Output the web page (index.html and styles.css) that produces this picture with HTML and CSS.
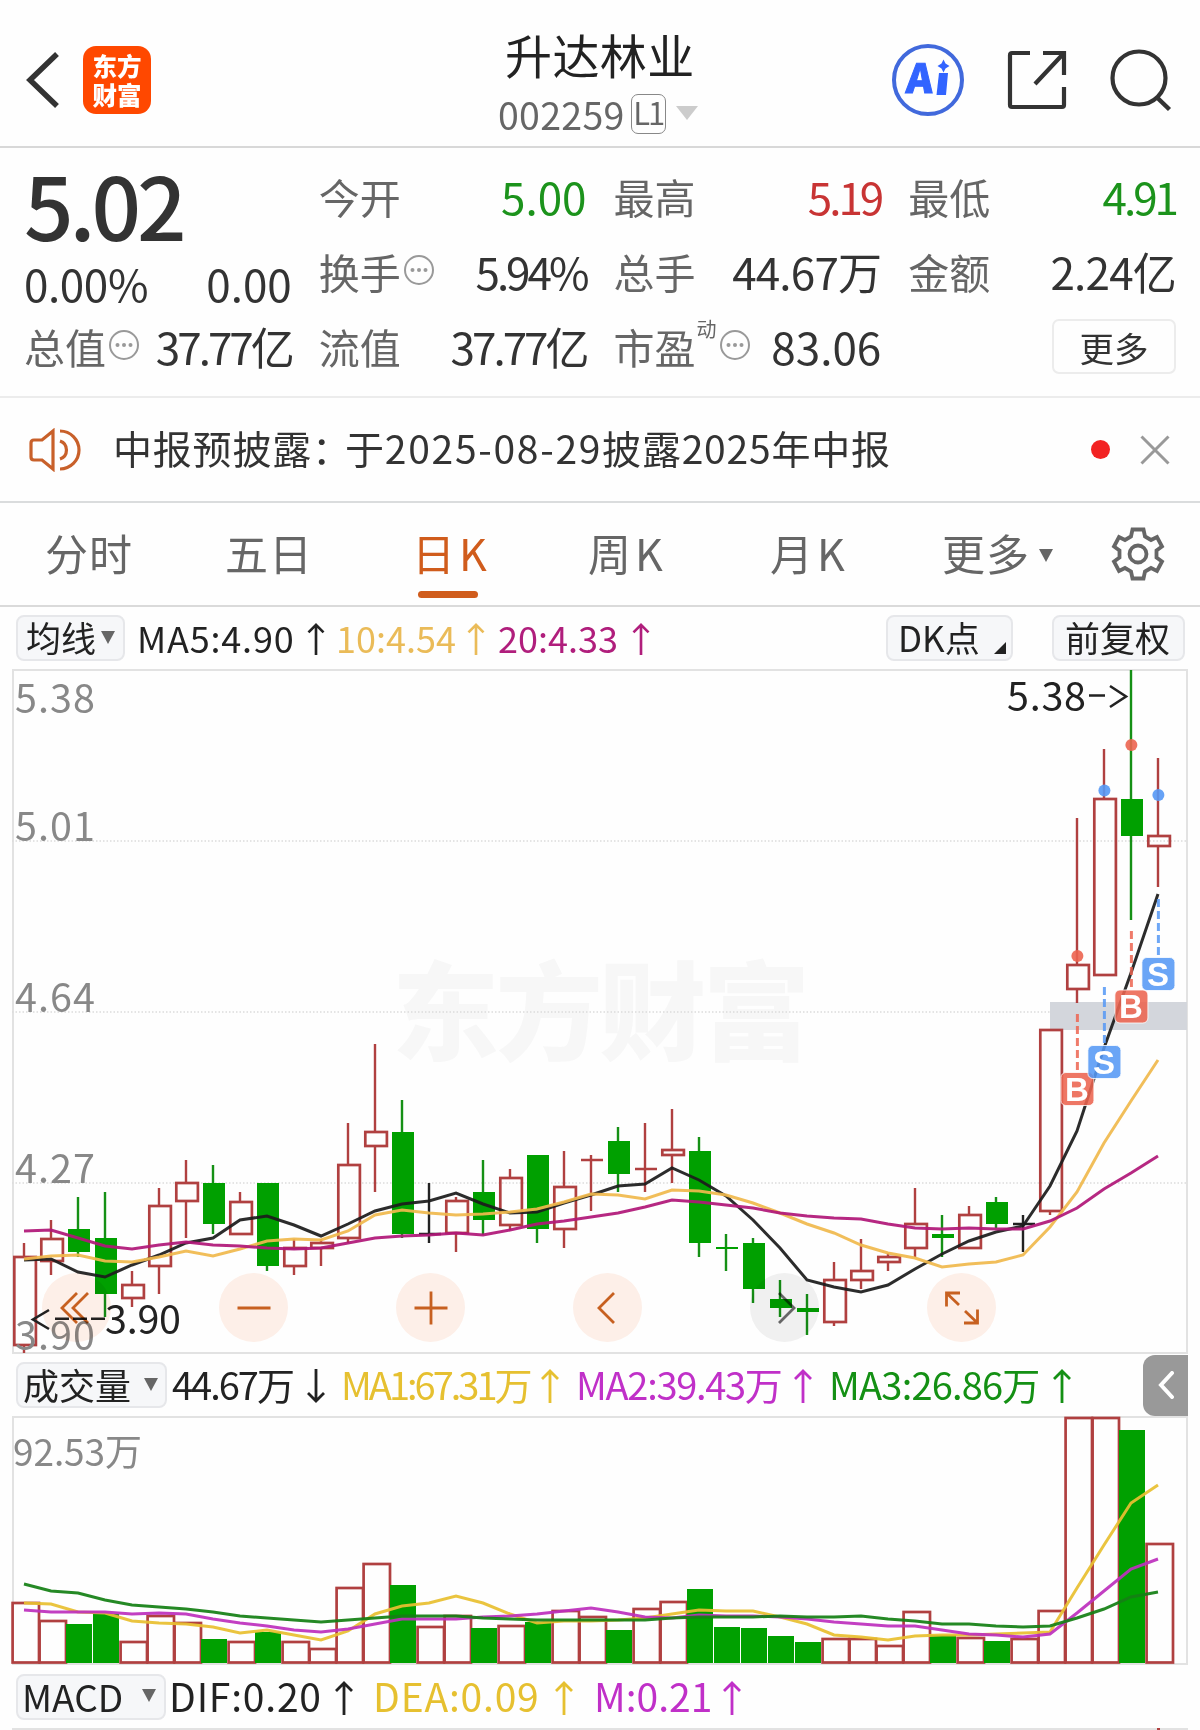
FILE: index.html
```html
<!DOCTYPE html>
<html lang="zh-CN">
<head>
    <meta charset="UTF-8">
    <meta name="viewport" content="width=device-width, initial-scale=1.0">
    <title>升达林业 002259</title>
    <link rel="stylesheet" href="styles.css">
</head>
<body>
    <svg class="defs" width="0" height="0">
        <symbol id="up" viewBox="0 0 18 34"><path d="M9 34V2M1 10L9 2l8 8" fill="none" stroke="currentColor" stroke-width="2.8"/></symbol>
        <symbol id="down" viewBox="0 0 18 34"><path d="M9 0v32M1 24l8 8 8-8" fill="none" stroke="currentColor" stroke-width="2.8"/></symbol>
        <symbol id="info" viewBox="0 0 32 32"><circle cx="16" cy="16" r="14" fill="none" stroke="#999" stroke-width="2"/><circle cx="9.5" cy="16" r="2" fill="#999"/><circle cx="16" cy="16" r="2" fill="#999"/><circle cx="22.5" cy="16" r="2" fill="#999"/></symbol>
    </svg>

    <header class="topbar">
        <svg class="back" viewBox="0 0 34 58"><path d="M31 3L4 29l27 26" fill="none" stroke="#333" stroke-width="5.5"/></svg>
        <div class="logo"><span>东方</span><span>财富</span></div>
        <div class="stock">
            <h1>升达林业</h1>
            <div class="code">002259<span class="level">L1</span><i class="caret"></i></div>
        </div>
        <svg class="ai" viewBox="0 0 74 74">
            <circle cx="37" cy="37" r="34" fill="none" stroke="#4169dc" stroke-width="4"/>
            <text x="18" y="50.5" transform="skewX(-4)" class="ai-text">A</text>
            <path d="M48 30h9l-2 22h-9.500z" fill="#3264ff"/>
            <path d="M52.500 16.500l2 4 4 2.500-4 2.500-2 4-2-4-4-2.500 4-2.500z" fill="#3264ff"/>
        </svg>
        <svg class="share" viewBox="0 0 60 60"><path d="M23 3H5q-2 0-2 2v50q0 2 2 2h50q2 0 2-2V37M36 3h21v22M57 3L28 34" fill="none" stroke="#333" stroke-width="4.2"/></svg>
        <svg class="search" viewBox="0 0 62 64"><circle cx="29" cy="30" r="26.5" fill="none" stroke="#333" stroke-width="4.2"/><path d="M46.500 49l13 12.500" stroke="#333" stroke-width="4.5"/></svg>
    </header>

    <section class="quote">
        <div class="col col-main">
            <div class="price">5.02</div>
            <div class="change"><b class="pct">0.00%</b><b>0.00</b></div>
            <div class="item"><span>总值</span><svg class="info"><use href="#info"/></svg><b class="s3">37.77亿</b></div>
        </div>
        <div class="col">
            <div class="item"><span>今开</span><b class="down">5.00</b></div>
            <div class="item"><span>换手</span><svg class="info"><use href="#info"/></svg><b class="s3">5.94%</b></div>
            <div class="item"><span>流值</span><b class="s3">37.77亿</b></div>
        </div>
        <div class="col">
            <div class="item"><span>最高</span><b class="up s3">5.19</b></div>
            <div class="item"><span>总手</span><b class="s1">44.67万</b></div>
            <div class="item"><span>市盈</span><sup>动</sup><svg class="info"><use href="#info"/></svg><b>83.06</b></div>
        </div>
        <div class="col">
            <div class="item"><span>最低</span><b class="down s3">4.91</b></div>
            <div class="item"><span>金额</span><b class="s1">2.24亿</b></div>
            <div class="item"><button class="more">更多</button></div>
        </div>
    </section>

    <section class="notice">
        <svg class="speaker" viewBox="0 0 52 44"><path d="M24 3L13 12H5q-3 0-3 3v14q0 3 3 3h8l11 9z" fill="none" stroke="#c8602a" stroke-width="3.2"/><path d="M31 13a9.500 9.500 0 0 1 0 18M31 3a19 19 0 0 1 0 38" fill="none" stroke="#c8602a" stroke-width="3.2"/></svg>
        <p>中报预披露<span class="colon">：</span>于<span class="date">2025-08-29</span>披露2025年中报</p>
        <i class="dot"></i>
        <svg class="close" viewBox="0 0 30 30"><path d="M1.500 1.500l27 27M28.500 1.500l-27 27" stroke="#999" stroke-width="3"/></svg>
    </section>

    <nav class="tabs">
        <a>分时</a>
        <a>五日</a>
        <a class="k active">日K</a>
        <a class="k">周K</a>
        <a class="k">月K</a>
        <a>更多<i class="caret"></i></a>
        <svg class="gear" viewBox="-27 -27 54 54"><path d="M-5.500 -24.500H5.500L7 -17.500L13 -14L19 -17L24 -7.500L18.500 -3.500V3.500L24 7.500L19 17L13 14L7 17.500L5.500 24.500H-5.500L-7 17.500L-13 14L-19 17L-24 7.500L-18.500 3.500V-3.500L-24 -7.500L-19 -17L-13 -14L-7 -17.500Z"/><circle r="8.500"/></svg>
    </nav>

    <div class="readout ma">
        <button class="picker">均线<i class="caret"></i></button>
        <div class="val"><span class="w1">MA5:4.90</span><svg><use href="#up"/></svg></div>
        <div class="val gold"><span>10:4.54</span><svg><use href="#up"/></svg></div>
        <div class="val berry"><span>20:4.33</span><svg><use href="#up"/></svg></div>
        <button class="picker dk">DK点<i class="corner"></i></button>
        <button class="picker adj">前复权</button>
    </div>

    <div class="chart">
        <svg id="kline" viewBox="0 669 1200 685"></svg>
        <div class="tools">
            <button><svg viewBox="-18 -18 36 36"><path d="M0 -15L-15 0L0 15M11 -15L-4 0L11 15"/></svg></button>
            <button><svg viewBox="-18 -18 36 36"><path d="M-16.500 0h33"/></svg></button>
            <button><svg viewBox="-18 -18 36 36"><path d="M-16.500 0h33M0 -16.500v33"/></svg></button>
            <button><svg viewBox="-18 -18 36 36"><path d="M6 -15L-9 0L6 15"/></svg></button>
            <button class="off"><svg viewBox="-18 -18 36 36"><path d="M-6 -15L9 0L-6 15"/></svg></button>
            <button><svg viewBox="-18 -18 36 36"><path d="M-15.500 -1.500v-13.500h13.500M-15 -14.500L-3 -3M15.500 1.500v13.500h-13.500M15 14.500L3 3"/></svg></button>
        </div>
    </div>

    <div class="readout vol">
        <button class="picker">成交量<i class="caret"></i></button>
        <div class="val"><span class="s2">44.67万</span><svg><use href="#down"/></svg></div>
        <div class="val yellow"><span class="s3">MA1:67.31万</span><svg><use href="#up"/></svg></div>
        <div class="val violet"><span class="s15">MA2:39.43万</span><svg><use href="#up"/></svg></div>
        <div class="val green"><span class="s1">MA3:26.86万</span><svg><use href="#up"/></svg></div>
        <button class="drawer"><svg viewBox="0 0 16 28"><path d="M14 2L3 14l11 12" fill="none" stroke="#fff" stroke-width="4" stroke-linecap="round"/></svg></button>
    </div>

    <div class="chart">
        <svg id="volume" viewBox="0 1416 1200 249"></svg>
    </div>

    <div class="readout macd">
        <button class="picker">MACD<i class="caret"></i></button>
        <div class="val"><span class="w1">DIF:0.20</span><svg><use href="#up"/></svg></div>
        <div class="val yellow"><span class="w1">DEA:0.09</span><svg><use href="#up"/></svg></div>
        <div class="val violet"><span>M:0.21</span><svg><use href="#up"/></svg></div>
    </div>
    <div class="next-chart"><i></i></div>

    <script src="chart.js"></script>
</body>
</html>
```
FILE: styles.css
```css
* {
    box-sizing: border-box;
}
body {
    margin: 0;
    width: 1200px;
    height: 1730px;
    overflow: hidden;
    background: #fefefe;
    color: #333;
    font-family: "Noto Sans CJK SC", "Noto Sans", sans-serif;
}
h1, p {
    margin: 0;
    font-weight: 400;
}
b, i {
    font-weight: 400;
    font-style: normal;
}
svg {
    display: block;
    flex: none;
}
button {
    font: inherit;
    color: #222;
    padding: 0;
    border: none;
    background: none;
}
.defs {
    position: absolute;
}
.caret {
    display: inline-block;
    border: 7.5px solid transparent;
    border-top: 13px solid #666;
    border-bottom: 0;
}

/* letter spacing steps for figures */
.s1 { letter-spacing: -0.8px; }
.s15 { letter-spacing: -1.3px; }
.s2 { letter-spacing: -2px; }
.s3 { letter-spacing: -3px; }
.w1 { letter-spacing: 0.8px; }

/* top bar */
.topbar {
    display: flex;
    align-items: center;
    height: 148px;
    padding: 14px 28px 0 26px;
    border-bottom: 2px solid #d8d8d8;
}
.back {
    width: 34px;
    height: 58px;
}
.logo {
    display: flex;
    flex-direction: column;
    justify-content: center;
    width: 68px;
    height: 68px;
    margin-left: 23px;
    border-radius: 13px;
    background: #ff4800;
    color: #fff;
    font-size: 24.5px;
    font-weight: 900;
    line-height: 29px;
    text-align: center;
}
.stock {
    width: 210px;
    margin-left: 345px;
    margin-top: 3px;
}
.stock h1 {
    padding-left: 9px;
    font-size: 47px;
    letter-spacing: 0.4px;
    line-height: 64px;
    color: #222;
}
.code {
    display: flex;
    align-items: center;
    padding-left: 2px;
    font-size: 37.5px;
    letter-spacing: 0.3px;
    line-height: 56px;
    color: #666;
}
.level {
    width: 35px;
    height: 40px;
    margin-left: 6px;
    border: 1.5px solid #888;
    border-radius: 7px;
    font-size: 31px;
    letter-spacing: -2px;
    line-height: 33px;
    text-align: center;
}
.code .caret {
    margin-left: 10px;
    margin-bottom: 2px;
    border-width: 14px 11px 0;
    border-top-color: #ccc;
}
.ai {
    width: 74px;
    height: 74px;
    margin-left: 185px;
}
.ai-text {
    font-family: "Noto Sans CJK SC", sans-serif;
    font-size: 40px;
    font-weight: 900;
    fill: #3264ff;
    stroke: #3264ff;
    stroke-width: 1;
}
.share {
    width: 60px;
    height: 60px;
    margin-left: 42px;
}
.search {
    width: 62px;
    height: 64px;
    margin-left: 43px;
}

/* quote */
.quote {
    display: flex;
    gap: 27px;
    height: 250px;
    padding: 11px 24px 0 24px;
    border-bottom: 2px solid #ececec;
}
.col {
    width: 268px;
}
.item {
    display: flex;
    align-items: center;
    height: 75px;
    font-size: 41px;
    line-height: 75px;
    color: #666;
}
.item b {
    margin-left: auto;
    font-size: 44px;
    color: #333;
    white-space: nowrap;
}
.item .down { color: #1c931c; }
.item .up { color: #c83434; }
.item sup {
    align-self: flex-start;
    margin-top: 6px;
    margin-left: 1px;
    font-size: 20px;
    line-height: 28px;
}
.info {
    width: 32px;
    height: 32px;
    margin-left: 2px;
    margin-bottom: 4px;
}
.price {
    height: 88px;
    font-size: 87px;
    font-weight: 500;
    line-height: 88px;
    letter-spacing: -4px;
}
.change {
    display: flex;
    justify-content: space-between;
    height: 62px;
    font-size: 44px;
    line-height: 72px;
}
.pct {
    letter-spacing: -0.4px;
}
.more {
    width: 124px;
    height: 55px;
    margin-left: auto;
    border: 2px solid #ececec;
    border-radius: 7px;
    font-size: 34.5px;
    line-height: 46px;
    color: #333;
}

/* notice */
.notice {
    display: flex;
    align-items: center;
    height: 105px;
    padding: 0 30px 0 29px;
    border-bottom: 2px solid #dadcdd;
}
.speaker {
    width: 52px;
    height: 44px;
}
.notice p {
    width: 979px;
    padding-left: 32px;
    padding-bottom: 5px;
    font-size: 39px;
    letter-spacing: 0.8px;
    line-height: 98px;
    white-space: nowrap;
}
.colon {
    letter-spacing: -6px;
}
.date {
    letter-spacing: 1.7px;
}
.dot {
    width: 19px;
    height: 19px;
    margin-left: 32px;
    border-radius: 50%;
    background: #f22222;
}
.close {
    width: 30px;
    height: 30px;
    margin-left: 30px;
}

/* period tabs */
.tabs {
    display: grid;
    grid-template-columns: 180px 188px 176px 182px 171px 194px 60px;
    align-items: center;
    height: 104px;
    padding-left: 45px;
    border-bottom: 2px solid #dadada;
    font-size: 43px;
    letter-spacing: 1px;
    line-height: 99px;
    color: #666;
}
.tabs a {
    position: relative;
    height: 102px;
    white-space: nowrap;
}
.tabs .k {
    margin-left: -1px;
    letter-spacing: 4px;
}
.tabs .active {
    color: #d05c1c;
}
.tabs .active::after {
    content: "";
    position: absolute;
    left: 6px;
    bottom: 7px;
    width: 60px;
    height: 7px;
    border-radius: 4px;
    background: #d05c1c;
}
.tabs .caret {
    margin-left: 9px;
    vertical-align: 9px;
}
.gear {
    width: 54px;
    height: 54px;
    margin-left: -25px;
    fill: none;
    stroke: #666;
    stroke-width: 3.8;
}

/* indicator rows */
.readout {
    display: flex;
    align-items: center;
    height: 63px;
    padding-left: 16px;
    color: #222;
}
.picker {
    display: flex;
    align-items: center;
    height: 46px;
    border: 2px solid #e6e7ea;
    border-radius: 8px;
    background: #f6f7f9;
    padding-left: 8px;
    padding-bottom: 2px;
    line-height: 40px;
    white-space: nowrap;
}
.val {
    display: flex;
    align-items: center;
    justify-content: space-between;
    padding-bottom: 3px;
    line-height: 54px;
    white-space: nowrap;
}
.val svg {
    width: 18px;
    height: 34px;
    margin-top: 5px;
}
.gold { color: #eabb58; }
.berry { color: #b01e7c; }
.yellow { color: #e6c030; }
.violet { color: #c030c8; }
.green { color: #149014; }

.ma { height: 62px; font-size: 36px; }
.ma .picker { width: 109px; font-size: 35px; }
.ma .caret { margin-left: 5px; }
.ma .val { width: 188px; margin-left: 12px; }
.ma .gold { width: 149px; margin-left: 11px; }
.ma .berry { width: 152px; margin-left: 13px; }
.ma .val svg { height: 32px; }
.ma .dk { position: relative; width: 127px; margin-left: 236px; padding-left: 10px; }
.ma .adj { width: 133px; margin-left: 39px; padding-left: 11px; }
.corner {
    position: absolute;
    right: 5px;
    bottom: 5px;
    border-left: 12px solid transparent;
    border-bottom: 12px solid #222;
}

.vol { height: 62px; font-size: 38px; }
.vol .picker { width: 151px; font-size: 36px; padding-left: 5px; }
.vol .caret { margin-left: 13px; }
.vol .val { width: 153px; margin-left: 5px; }
.vol .yellow { width: 218px; margin-left: 16px; }
.vol .violet { width: 236px; margin-left: 17px; }
.vol .green { width: 242px; margin-left: 17px; }
.drawer {
    display: flex;
    align-items: center;
    width: 45px;
    height: 61px;
    margin-left: 72px;
    padding-left: 15px;
    border-radius: 12px 0 0 12px;
    background: #999;
}
.drawer svg {
    width: 16px;
    height: 28px;
}

.macd { font-size: 39px; }
.macd .picker { width: 150px; font-size: 37px; padding-left: 4px; }
.macd .caret { margin-left: 19px; }
.macd .val { width: 184px; margin-left: 3px; }
.macd .yellow { width: 200px; margin-left: 20px; }
.macd .violet { width: 147px; margin-left: 21px; }

/* charts */
.chart {
    position: relative;
}
.chart > svg {
    overflow: visible;
}
#kline {
    width: 1200px;
    height: 685px;
}
#volume {
    width: 1200px;
    height: 249px;
}
.frame { fill: none; stroke: #e2e2e2; stroke-width: 2; }
.grid { stroke: #dcdcdc; stroke-width: 1.5; stroke-dasharray: 1.5 2; }
.axis { font-size: 39.5px; fill: #888; }
.axis-vol { font-size: 37px; fill: #888; }
.mark { font-size: 39.5px; fill: #222; }
.watermark { font-size: 107px; font-weight: 900; fill: #f7f7f7; }
.gap { fill: #d3d6dc; }
.rise { fill: none; stroke: #b04040; stroke-width: 2.7; }
.fall { fill: #00a000; stroke: none; }
.wick-rise { stroke: #b04040; stroke-width: 2.4; }
.wick-fall { stroke: #159015; stroke-width: 2.4; }
.wick-flat { stroke: #222; stroke-width: 2.4; }
.line { fill: none; stroke-width: 3; stroke-opacity: 0.93; }
.tag { font-family: "Liberation Sans", sans-serif; font-size: 33px; font-weight: 700; fill: #fff; text-anchor: middle; }

.tools {
    position: absolute;
    left: 42px;
    bottom: 12px;
    display: flex;
    gap: 108px;
    mix-blend-mode: multiply;
}
.tools button {
    display: flex;
    align-items: center;
    justify-content: center;
    width: 69px;
    height: 69px;
    border-radius: 50%;
    background: #fef0e9;
}
.tools svg {
    width: 36px;
    height: 36px;
    fill: none;
    stroke: #c86020;
    stroke-width: 2.8;
}
.tools .off {
    background: #f1f1f1;
}
.tools .off svg {
    stroke: #666;
}

.next-chart {
    position: relative;
    width: 1176px;
    height: 2px;
    margin-left: 12px;
    background: #e2e2e2;
}
.next-chart i {
    position: absolute;
    left: 1145px;
    width: 3px;
    height: 2px;
    background: #b04040;
}
```
FILE: chart.js
```js
const STEP = 27;
const FIRST = 24;
const cx = (i) => FIRST + i * STEP;

// [type, high, top, bottom, low]  r = rise, g = fall, k = flat
const candles = [
    ['r', 1243, 1256, 1346, 1353], ['r', 1220, 1238, 1262, 1275], ['g', 1197, 1229, 1252, 1257],
    ['g', 1192, 1238, 1294, 1317], ['r', 1271, 1284, 1299, 1307], ['r', 1188, 1205, 1267, 1294],
    ['r', 1160, 1182, 1202, 1238], ['g', 1165, 1183, 1224, 1234], ['r', 1192, 1201, 1235, 1235],
    ['g', 1183, 1183, 1266, 1271], ['r', 1239, 1247, 1267, 1275], ['r', 1239, 1242, 1249, 1266],
    ['r', 1123, 1164, 1239, 1243], ['r', 1044, 1131, 1147, 1192], ['g', 1100, 1132, 1234, 1238],
    ['k', 1183, 1233, 1235, 1243], ['r', 1197, 1200, 1234, 1252], ['g', 1160, 1192, 1220, 1235],
    ['r', 1169, 1177, 1226, 1230], ['g', 1155, 1155, 1229, 1243], ['r', 1151, 1186, 1230, 1248],
    ['r', 1155, 1159, 1161, 1211], ['g', 1127, 1141, 1174, 1192], ['r', 1123, 1168, 1170, 1192],
    ['r', 1109, 1149, 1156, 1183], ['g', 1137, 1151, 1243, 1257], ['g', 1234, 1247, 1249, 1271],
    ['g', 1238, 1243, 1289, 1303], ['g', 1280, 1299, 1308, 1317], ['g', 1294, 1308, 1312, 1335],
    ['r', 1262, 1279, 1323, 1326], ['r', 1239, 1270, 1281, 1289], ['r', 1253, 1256, 1263, 1271],
    ['r', 1188, 1223, 1249, 1257], ['g', 1215, 1234, 1238, 1257], ['r', 1206, 1214, 1249, 1249],
    ['g', 1197, 1202, 1224, 1228], ['k', 1215, 1223, 1225, 1252], ['r', 1029, 1029, 1212, 1215],
    ['r', 818, 964, 990, 1003], ['r', 749, 798, 976, 976], ['g', 670, 799, 836, 920],
    ['r', 758, 835, 847, 887]
];
const ma5 = [1260, 1259, 1272, 1277, 1265, 1255, 1243, 1238, 1220, 1216, 1225, 1236, 1224, 1211, 1204, 1201, 1193, 1204, 1213, 1212, 1203, 1195, 1186, 1184, 1168, 1180, 1196, 1220, 1248, 1280, 1287, 1292, 1285, 1269, 1254, 1241, 1232, 1226, 1186, 1131, 1048, 973, 894];
const ma10 = [1259, 1256, 1255, 1261, 1262, 1257, 1251, 1256, 1249, 1241, 1239, 1240, 1231, 1215, 1210, 1213, 1215, 1214, 1212, 1209, 1202, 1194, 1195, 1199, 1190, 1191, 1195, 1203, 1213, 1224, 1233, 1245, 1253, 1258, 1267, 1264, 1262, 1255, 1227, 1192, 1143, 1101, 1060];
const ma20 = [1231, 1230, 1238, 1246, 1249, 1245, 1242, 1245, 1246, 1248, 1249, 1248, 1243, 1238, 1236, 1235, 1233, 1235, 1230, 1224, 1221, 1217, 1213, 1207, 1200, 1202, 1205, 1208, 1213, 1216, 1218, 1219, 1224, 1228, 1229, 1228, 1229, 1229, 1221, 1208, 1189, 1173, 1156];

const volumes = [
    ['r', 1603], ['r', 1621], ['g', 1624], ['g', 1614], ['r', 1642], ['r', 1616], ['r', 1623], ['g', 1639], ['r', 1642],
    ['g', 1632], ['r', 1642], ['r', 1649], ['r', 1588], ['r', 1564], ['g', 1585], ['r', 1627], ['r', 1616], ['g', 1628],
    ['r', 1626], ['g', 1622], ['r', 1611], ['r', 1617], ['g', 1630], ['r', 1609], ['r', 1602], ['g', 1589], ['g', 1627],
    ['g', 1628], ['g', 1636], ['g', 1642], ['r', 1639], ['r', 1639], ['r', 1646], ['r', 1612], ['g', 1635], ['r', 1638],
    ['g', 1641], ['r', 1639], ['r', 1611], ['r', 1418], ['r', 1418], ['g', 1430], ['r', 1544]
];
const vma1 = [1603, 1604, 1612, 1613, 1621, 1623, 1624, 1627, 1633, 1630, 1635, 1640, 1631, 1614, 1606, 1603, 1596, 1603, 1614, 1623, 1621, 1621, 1620, 1618, 1614, 1610, 1611, 1611, 1617, 1624, 1635, 1637, 1640, 1636, 1635, 1635, 1634, 1633, 1632, 1588, 1545, 1503, 1485];
const vma2 = [1610, 1612, 1612, 1612, 1614, 1613, 1614, 1619, 1623, 1626, 1630, 1632, 1629, 1624, 1619, 1619, 1619, 1617, 1616, 1614, 1611, 1608, 1612, 1617, 1618, 1615, 1616, 1616, 1617, 1619, 1622, 1624, 1626, 1626, 1630, 1634, 1635, 1637, 1634, 1613, 1591, 1569, 1559];
const vma3 = [1584, 1591, 1593, 1600, 1605, 1607, 1609, 1612, 1616, 1618, 1620, 1622, 1620, 1618, 1616, 1616, 1616, 1618, 1619, 1620, 1620, 1620, 1620, 1620, 1618, 1617, 1617, 1617, 1616, 1617, 1617, 1616, 1619, 1621, 1624, 1624, 1626, 1627, 1626, 1618, 1609, 1597, 1592];

const line = (values, color) =>
    `<polyline class="line" stroke="${color}" points="${values.map((y, i) => cx(i) + ',' + y).join(' ')}"/>`;

function candle([type, high, top, bottom, low], i) {
    const x = cx(i);
    const name = { r: 'rise', g: 'fall', k: 'flat' }[type];
    // a real body only when open and close differ
    if (type === 'k' || (type === 'r' && bottom - top < 4)) {
        const y = (top + bottom) / 2;
        return `<path class="wick-${name}" d="M${x} ${high}V${low}M${x - 10} ${y}H${x + 12}"/>`;
    }
    const body = type === 'r'
        ? `<rect class="rise" x="${x - 9.7}" y="${top + 1}" width="21.6" height="${bottom - top - 2}"/>`
        : `<rect class="fall" x="${x - 10}" y="${top}" width="22" height="${bottom - top}"/>`;
    return `<path class="wick-${name}" d="M${x} ${high}V${top}M${x} ${bottom}V${low}"/>` + body;
}

function signal(i, letter, dotY, from, boxY) {
    const x = cx(i) + 0.4;
    const color = letter === 'B' ? '#ec6450' : '#5598f5';
    return `<circle cx="${x}" cy="${dotY}" r="6" fill="${color}" fill-opacity="0.9"/>
        <path d="M${x} ${from}V${boxY - 2}" stroke="${color}" stroke-width="3" stroke-dasharray="8 4" stroke-opacity="0.85"/>
        <rect x="${x - 16.5}" y="${boxY}" width="33" height="33" rx="5" fill="${color}" fill-opacity="0.88" stroke="#fff" stroke-width="0.8"/>
        <text class="tag" x="${x - 0.5}" y="${boxY + 28}">${letter}</text>`;
}

const grid = [841, 1012, 1183].map((y) => `<path class="grid" d="M12 ${y}H1187"/>`).join('');
const labels = [['5.38', 713], ['5.01', 841], ['4.64', 1012], ['4.27', 1183], ['3.90', 1350]]
    .map(([t, y]) => `<text class="axis" x="15" y="${y}" textLength="80">${t}</text>`).join('');

document.getElementById('kline').innerHTML = `
    <text class="watermark" x="392" y="1052" textLength="418">东方财富</text>
    <path class="frame" d="M13 1353V670H1187V1353Z"/>
    ${grid}
    <rect class="gap" x="1050" y="1002" width="137" height="28"/>
    ${candles.map(candle).join('')}
    ${line(ma5, '#1c1c1c')}${line(ma10, '#f0b94e')}${line(ma20, '#b01878')}
    ${signal(39, 'B', 956, 1014, 1072.5)}
    ${signal(40, 'S', 790.5, 987, 1045.5)}
    ${signal(41, 'B', 745, 931, 990)}
    ${signal(42, 'S', 795, 899, 957.5)}
    ${labels}
    <text class="mark" x="105" y="1333.5" textLength="76">3.90</text>
    <path d="M49 1310L33 1319.500L49 1329M55 1318.700h14M73 1318.700h14M91 1318.700h14" fill="none" stroke="#222" stroke-width="2.6"/>
    <text class="mark" x="1007" y="711" textLength="79">5.38</text>
    <path d="M1089 695.500h16M1110 686l16 10.500l-16 10.500" fill="none" stroke="#222" stroke-width="2.6"/>`;

document.getElementById('volume').innerHTML = `
    <path class="frame" d="M13 1664V1417H1187V1664Z"/>
    <text class="axis-vol" x="13" y="1466" textLength="129">92.53万</text>
    ${volumes.map(([type, top], i) => type === 'r'
        ? `<rect class="rise" x="${12.6 + i * STEP}" y="${top}" width="26.4" height="${1662.5 - top}"/>`
        : `<rect class="fall" x="${12 + i * STEP}" y="${top}" width="26" height="${1663 - top}"/>`).join('')}
    ${line(vma1, '#e8c030')}${line(vma2, '#bd30bd')}${line(vma3, '#148014')}`;
```
